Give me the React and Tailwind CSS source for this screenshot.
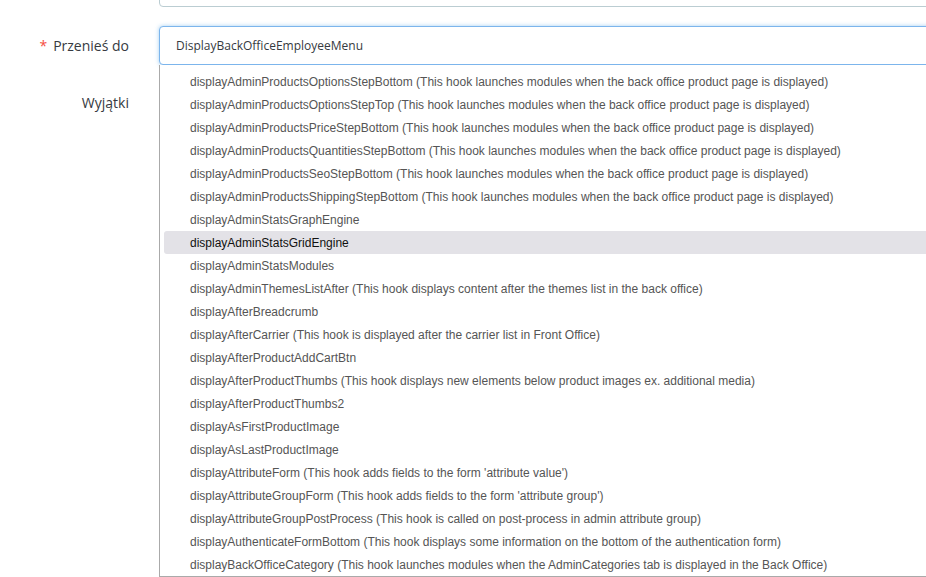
import React from 'react';

const items = [
  "displayAdminProductsOptionsStepBottom (This hook launches modules when the back office product page is displayed)",
  "displayAdminProductsOptionsStepTop (This hook launches modules when the back office product page is displayed)",
  "displayAdminProductsPriceStepBottom (This hook launches modules when the back office product page is displayed)",
  "displayAdminProductsQuantitiesStepBottom (This hook launches modules when the back office product page is displayed)",
  "displayAdminProductsSeoStepBottom (This hook launches modules when the back office product page is displayed)",
  "displayAdminProductsShippingStepBottom (This hook launches modules when the back office product page is displayed)",
  "displayAdminStatsGraphEngine",
  "displayAdminStatsGridEngine",
  "displayAdminStatsModules",
  "displayAdminThemesListAfter (This hook displays content after the themes list in the back office)",
  "displayAfterBreadcrumb",
  "displayAfterCarrier (This hook is displayed after the carrier list in Front Office)",
  "displayAfterProductAddCartBtn",
  "displayAfterProductThumbs (This hook displays new elements below product images ex. additional media)",
  "displayAfterProductThumbs2",
  "displayAsFirstProductImage",
  "displayAsLastProductImage",
  "displayAttributeForm (This hook adds fields to the form 'attribute value')",
  "displayAttributeGroupForm (This hook adds fields to the form 'attribute group')",
  "displayAttributeGroupPostProcess (This hook is called on post-process in admin attribute group)",
  "displayAuthenticateFormBottom (This hook displays some information on the bottom of the authentication form)",
  "displayBackOfficeCategory (This hook launches modules when the AdminCategories tab is displayed in the Back Office)",
];

export default function App() {
  return (
    <div className="w-[926px] h-[577px] overflow-hidden bg-white relative" style={{ fontFamily: '"Open Sans", sans-serif' }}>
      {/* previous field */}
      <div className="absolute left-[159px] top-[-30px] w-[800px] h-[37px] border border-[#bbcdd2] rounded-[4px]" />

      <div className="flex pt-[26px]">
        <div className="w-[159px] shrink-0 flex flex-col items-end pr-[30px]">
          <div className="h-[38px] flex items-center text-[14px] text-[#363a41]">
            <span className="text-[#f54c3e] mr-[6px]">*</span>Przenieś do
          </div>
          <div className="h-[2px]" />
          <div className="h-[24px] mt-[24px] flex items-center text-[14px] text-[#363a41]">Wyjątki</div>
        </div>

        <div className="flex-1 relative">
          <div className="w-[800px] h-[39px] border border-[#7cb5ec] rounded-l-[4px] shadow-[0_0_4px_rgba(102,175,233,0.6)] flex items-center pl-[16px] text-[12px] text-[#363a41] bg-white">
            DisplayBackOfficeEmployeeMenu
          </div>
          <div className="w-[800px] border border-[#aaaaaa] border-t-0 pt-[5px] pl-[4px] bg-white" style={{ fontFamily: '"Liberation Sans", Arial, sans-serif' }}>
            {items.map((t, i) => (
              <div
                key={i}
                className={
                  "h-[23px] flex items-center pl-[26px] text-[12px] whitespace-nowrap rounded-[3px] " +
                  (i === 7 ? "bg-[#e3e2e7] text-[#111111]" : "text-[#555555]")
                }
              >
                {t}
              </div>
            ))}
          </div>
        </div>
      </div>
    </div>
  );
}
